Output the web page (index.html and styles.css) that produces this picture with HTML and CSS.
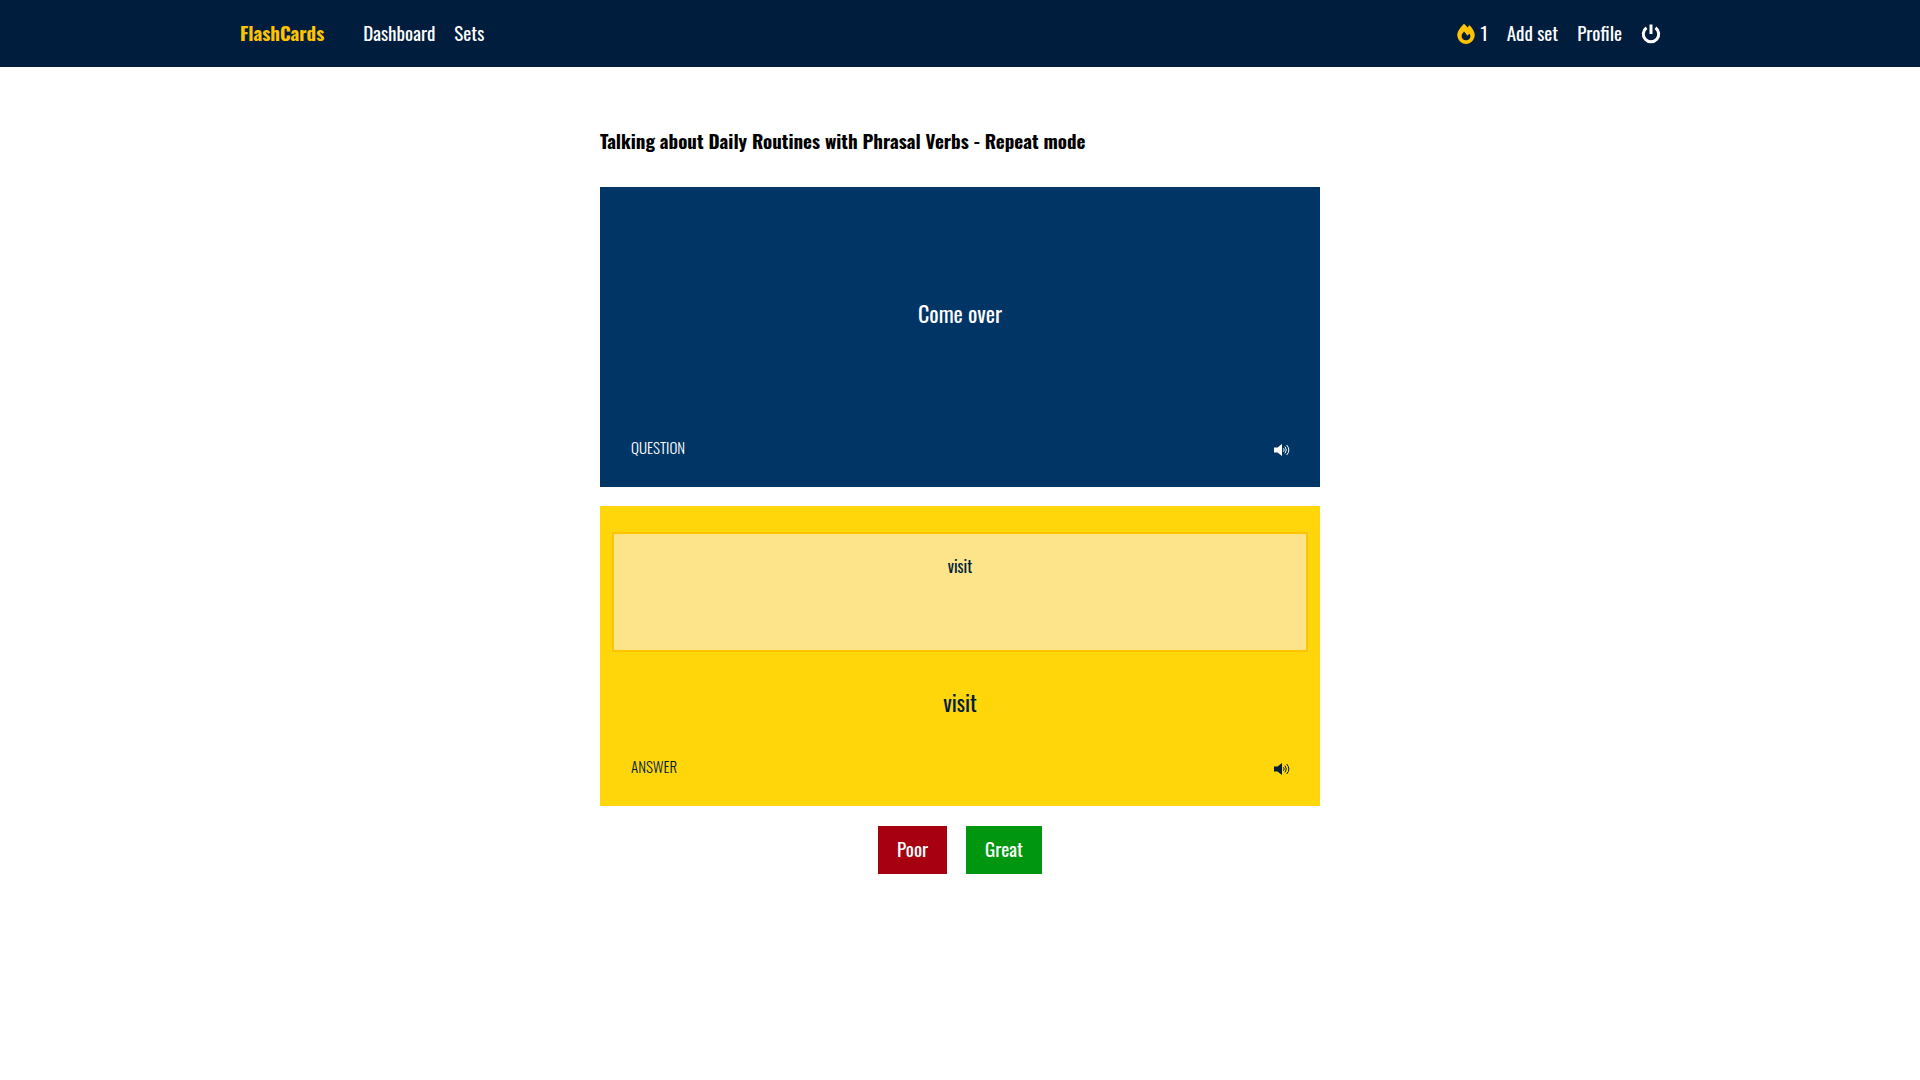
FILE: index.html
```html
<!DOCTYPE html>
<html lang="en">
<head>
  <meta charset="utf-8">
  <meta name="viewport" content="width=device-width, initial-scale=1">
  <title>FlashCards</title>
  <link rel="stylesheet" href="styles.css">
</head>
<body>
  <header class="site-header">
    <nav class="nav">
      <a class="brand" href="#">FlashCards</a>
      <a class="nav-link" href="#">Dashboard</a>
      <a class="nav-link" href="#">Sets</a>
      <span class="streak">
        <svg class="flame" viewBox="0 0 448 512" aria-hidden="true"><path d="M159.3 5.4c7.8-7.3 19.9-7.2 27.7 .1c27.6 25.9 53.5 53.8 77.7 84c11-14.4 23.5-30.1 37-42.9c7.9-7.4 20.1-7.4 28 .1c34.6 33 63.9 76.6 84.5 118c20.3 40.8 33.8 82.5 33.8 111.9C448 404.2 348.2 512 224 512C98.4 512 0 404.1 0 276.5c0-38.4 17.8-85.3 45.4-131.7C73.3 97.7 112.7 48.6 159.3 5.4zM225.7 416c25.3 0 47.7-7 68.8-21c42.1-29.4 53.4-88.2 28.1-134.4c-4.5-9-16-9.6-22.5-2l-25.2 29.3c-6.6 7.6-18.5 7.4-24.7-.5c-16.5-21-46-58.5-62.8-79.8c-6.3-8-18.3-8.1-24.7-.1c-33.8 42.5-50.8 69.3-50.8 99.4C112 375.4 162.6 416 225.7 416z"/></svg>
        1
      </span>
      <a class="nav-link" href="#">Add set</a>
      <a class="nav-link" href="#">Profile</a>
      <a class="nav-link" href="#" aria-label="Log out">
        <svg class="power" viewBox="0 0 20 20" aria-hidden="true"><path d="M10 .500V10M5.500 3.800a7.700 7.700 0 1 0 9 0"/></svg>
      </a>
    </nav>
  </header>

  <main class="study">
    <h1 class="title">Talking about Daily Routines with Phrasal Verbs - Repeat mode</h1>

    <section class="card question">
      <p class="phrase">Come over</p>
      <div class="card-footer">
        <span class="label">QUESTION</span>
        <button class="sound" type="button" aria-label="Play question">
          <svg class="speaker" viewBox="0 0 16 12" aria-hidden="true"><path class="cone" d="M0 3.500h3.500L8 0v12L3.500 8.500H0z"/><path class="waves" d="M9.500 4.300q1.400 1.700 0 3.400M11 2.600q2.700 3.400 0 6.800M12.700 1q4.300 5 0 10"/></svg>
        </button>
      </div>
    </section>

    <section class="card answer">
      <textarea class="reply" aria-label="Your answer">visit</textarea>
      <p class="phrase">visit</p>
      <div class="card-footer">
        <span class="label">ANSWER</span>
        <button class="sound" type="button" aria-label="Play answer">
          <svg class="speaker" viewBox="0 0 16 12" aria-hidden="true"><path class="cone" d="M0 3.500h3.500L8 0v12L3.500 8.500H0z"/><path class="waves" d="M9.500 4.300q1.400 1.700 0 3.400M11 2.600q2.700 3.400 0 6.800M12.700 1q4.300 5 0 10"/></svg>
        </button>
      </div>
    </section>

    <div class="ratings">
      <button class="rate poor" type="button">Poor</button>
      <button class="rate great" type="button">Great</button>
    </div>
  </main>
</body>
</html>
```

FILE: styles.css
```css
* {
  box-sizing: border-box;
  margin: 0;
}

body {
  background: #fff;
  color: #000;
  font-family: Oswald, "Liberation Sans Narrow", "Roboto Condensed", "Liberation Sans", sans-serif;
  font-size: 19px;
  line-height: 27px;
}

button,
textarea {
  border: 0;
  border-radius: 0;
  color: inherit;
  font: inherit;
}

.site-header {
  background: #001d3d;
  color: #fff;
}

.nav {
  display: flex;
  align-items: center;
  gap: 19px;
  max-width: 1440px;
  margin: 0 auto;
  padding: 19px 19px 21px 0;
}

.brand {
  margin-right: 20px;
  color: #ffc300;
  font-weight: 700;
  text-decoration: none;
}

.nav-link {
  display: flex;
  color: inherit;
  text-decoration: none;
}

.streak {
  display: flex;
  align-items: center;
  gap: 6px;
  margin-left: auto;
}

.flame,
.power {
  height: 20px;
  margin-top: 2px;
}

.flame {
  width: 18px;
  fill: #ffc300;
}

.power {
  width: 20px;
  fill: none;
  stroke: #fff;
  stroke-width: 3;
}

.study {
  display: flex;
  flex-direction: column;
  gap: 19px;
  max-width: 720px;
  margin: 0 auto;
  padding: 60px 0;
}

.title {
  margin-bottom: 14px;
  font-size: 19px;
  font-weight: 700;
  line-height: 27px;
}

.card {
  display: flex;
  flex-direction: column;
  min-height: 300px;
  padding: 26px 12px;
}

.question {
  background: #003566;
  color: #fff;
}

.answer {
  background: #ffd60a;
  color: #001d3d;
}

.phrase {
  display: flex;
  flex: 1;
  align-items: center;
  justify-content: center;
  font-size: 22px;
}

.question .phrase {
  padding-bottom: 20px;
}

.reply {
  width: 100%;
  height: 120px;
  padding: 19px;
  border: 2px solid #ffc300;
  background: #fde48a;
  font-size: 16px;
  text-align: center;
  resize: none;
}

.card-footer {
  display: flex;
  align-items: center;
  justify-content: space-between;
  padding: 0 18px 0 19px;
}

.label {
  font-size: 15px;
  font-weight: 300;
}

.sound {
  display: flex;
  padding: 4px 0 0;
  background: none;
}

.speaker {
  width: 16px;
  height: 12px;
}

.cone {
  fill: currentColor;
}

.waves {
  fill: none;
  stroke: currentColor;
}

.ratings {
  display: flex;
  justify-content: center;
  gap: 19px;
  padding-top: 1px;
}

.rate {
  height: 48px;
  padding: 0 19px 3px;
  color: #fff;
}

.poor {
  background: #a70011;
}

.great {
  background: #00960f;
}
```
